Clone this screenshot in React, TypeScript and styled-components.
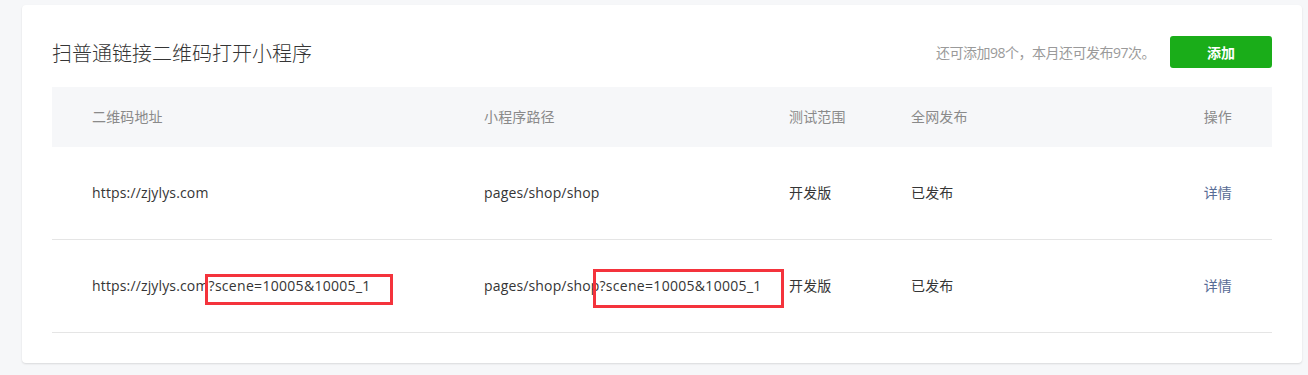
import React from 'react';
import styled, { createGlobalStyle } from 'styled-components';

const GlobalStyle = createGlobalStyle`
  html, body {
    margin: 0;
    padding: 0;
    background: #f6f7f9;
  }
  body {
    font-family: "Open Sans", "Noto Sans CJK SC", sans-serif;
    font-size: 14px;
    color: #353535;
  }
`;

const Page = styled.div`
  padding: 5px 6px 13px 22px;
`;

const Card = styled.section`
  background: #fff;
  border-radius: 4px;
  box-shadow: 0 1px 2px rgba(0, 0, 0, 0.12);
  padding: 31px 30px 30px;
`;

const Toolbar = styled.div`
  display: flex;
  align-items: center;
  height: 32px;
  margin-bottom: 19px;
`;

const Title = styled.h2`
  flex: 1;
  margin: 0;
  font-size: 20px;
  font-weight: 300;
  color: #353535;
  font-family: "Noto Sans CJK SC", sans-serif;
`;

const Quota = styled.span`
  color: #9a9a9a;
  font-size: 14px;
  letter-spacing: -0.5px;
  margin-right: 15px;
`;

const AddButton = styled.button`
  width: 102px;
  height: 32px;
  border: 0;
  border-radius: 3px;
  background: #1aad19;
  color: #fff;
  font-family: "Noto Sans CJK SC", sans-serif;
  font-size: 14px;
  font-weight: 700;
  cursor: pointer;
`;

const Row = styled.div<{ $head?: boolean }>`
  display: grid;
  grid-template-columns: 392px 305px 122px 1fr auto;
  align-items: center;
  padding: 0 40px;
  height: ${(p) => (p.$head ? '60px' : '92px')};
  background: ${(p) => (p.$head ? '#f6f7f9' : '#fff')};
  color: ${(p) => (p.$head ? '#8a8a8a' : '#353535')};
  border-bottom: ${(p) => (p.$head ? '0' : '1px solid #e5e5e5')};
  white-space: nowrap;
`;

const Cell = styled.div`
  line-height: 20px;
  letter-spacing: 0.15px;
`;

const Link = styled.a`
  color: #576b95;
  text-decoration: none;
  cursor: pointer;
`;

type Box = { top: number; right: number; bottom: number; left: number };

const Marked = styled.span<{ $box: Box }>`
  position: relative;
  letter-spacing: 0.3px;
  &::after {
    content: '';
    position: absolute;
    top: ${(p) => p.$box.top}px;
    right: ${(p) => p.$box.right}px;
    bottom: ${(p) => p.$box.bottom}px;
    left: ${(p) => p.$box.left}px;
    border: 3px solid #f4333c;
    pointer-events: none;
  }
`;

const rows = [
  { url: 'https://zjylys.com', path: 'pages/shop/shop', marked: false },
  { url: 'https://zjylys.com', path: 'pages/shop/shop', marked: true },
];

const query = '?scene=10005&10005_1';

export default function App() {
  return (
    <Page>
      <GlobalStyle />
      <Card>
        <Toolbar>
          <Title>扫普通链接二维码打开小程序</Title>
          <Quota>还可添加98个，本月还可发布97次。</Quota>
          <AddButton>添加</AddButton>
        </Toolbar>
        <Row $head>
          <Cell>二维码地址</Cell>
          <Cell>小程序路径</Cell>
          <Cell>测试范围</Cell>
          <Cell>全网发布</Cell>
          <Cell>操作</Cell>
        </Row>
        {rows.map((r, i) => (
          <Row key={i}>
            <Cell>
              {r.url}
              {r.marked && (
                <Marked $box={{ top: -2, right: -22, bottom: -10, left: -4 }}>{query}</Marked>
              )}
            </Cell>
            <Cell>
              {r.path}
              {r.marked && (
                <Marked $box={{ top: -7, right: -22, bottom: -13, left: -7 }}>{query}</Marked>
              )}
            </Cell>
            <Cell>开发版</Cell>
            <Cell>已发布</Cell>
            <Cell>
              <Link>详情</Link>
            </Cell>
          </Row>
        ))}
      </Card>
    </Page>
  );
}
